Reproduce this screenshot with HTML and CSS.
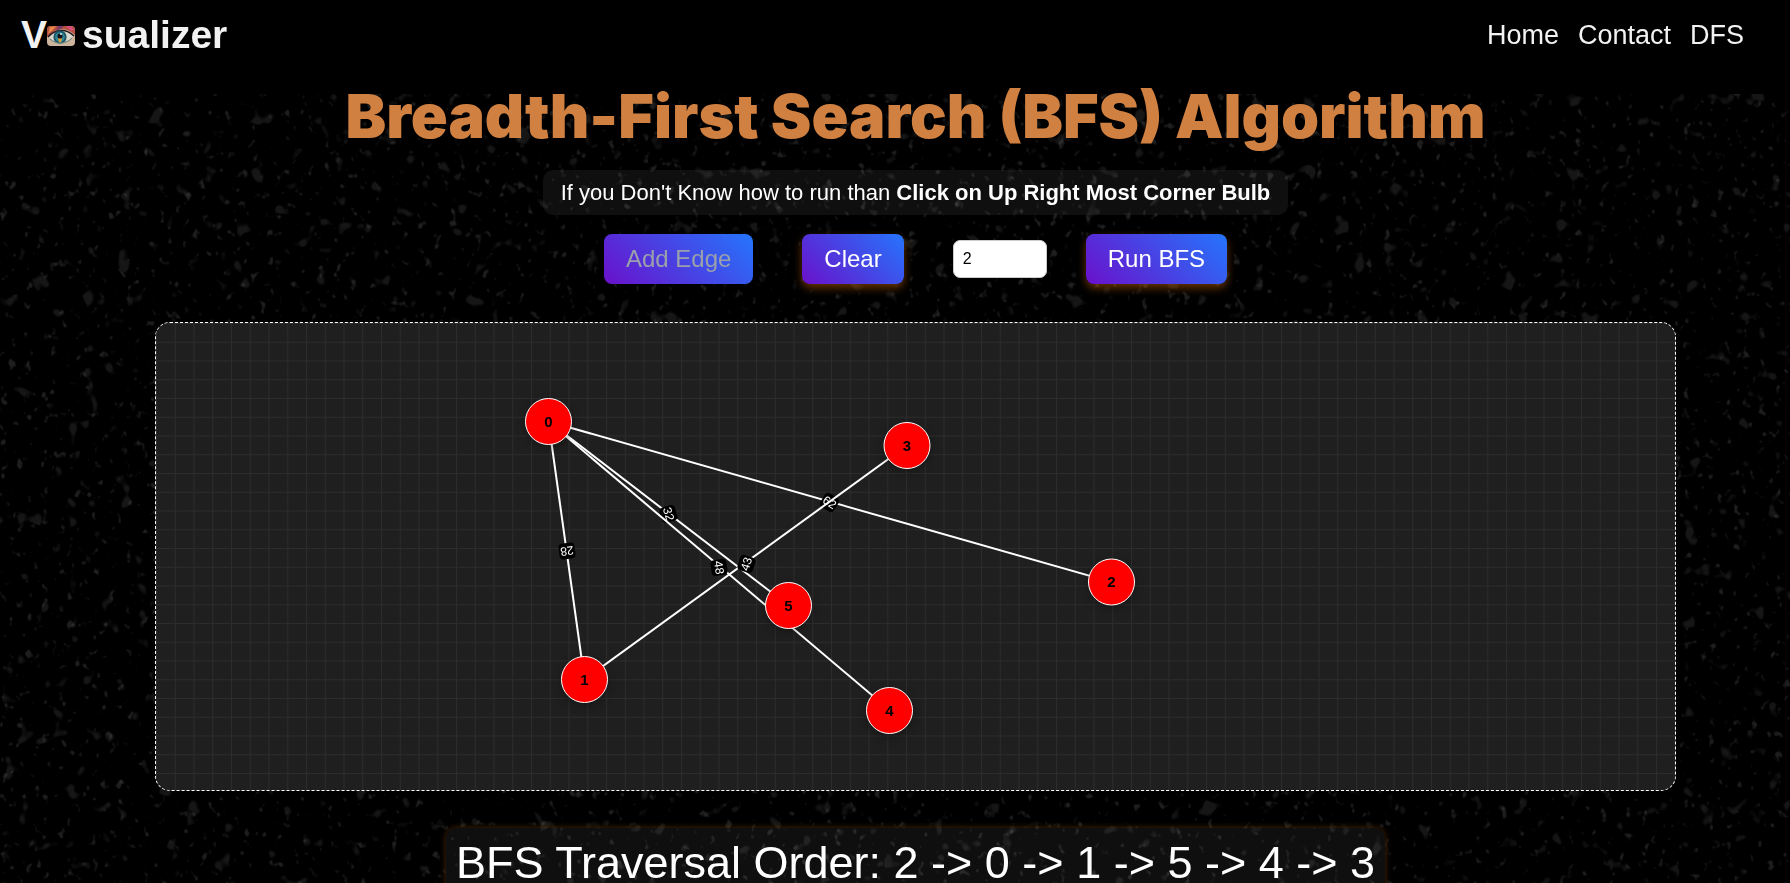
FILE: index.html
```html
<!DOCTYPE html>
<html lang="en">
<head>
<meta charset="utf-8">
<title>Visualizer - BFS</title>
<link rel="stylesheet" href="styles.css">
</head>
<body>
<svg class="texture" aria-hidden="true">
  <filter id="large" x="0" y="0" width="100%" height="100%" color-interpolation-filters="sRGB">
    <feTurbulence type="fractalNoise" baseFrequency="0.06 0.055" numOctaves="2" seed="8"/>
    <feColorMatrix values="0 0 0 0 1  0 0 0 0 1  0 0 0 0 1  9 0 0 0 -6"/>
    <feComponentTransfer><feFuncA type="linear" slope="0.09"/></feComponentTransfer>
  </filter>
  <filter id="small" x="0" y="0" width="100%" height="100%" color-interpolation-filters="sRGB">
    <feTurbulence type="fractalNoise" baseFrequency="0.12 0.1" numOctaves="2" seed="21"/>
    <feColorMatrix values="0 0 0 0 1  0 0 0 0 1  0 0 0 0 1  7 0 0 0 -4.6"/>
    <feComponentTransfer><feFuncA type="linear" slope="0.12"/></feComponentTransfer>
  </filter>
  <rect width="100%" height="100%" filter="url(#large)"/>
  <rect width="100%" height="100%" filter="url(#small)"/>
</svg>

<header class="navbar">
  <a class="logo" href="#">V<svg class="eye" viewBox="0 0 28 20" aria-hidden="true">
      <rect width="28" height="20" rx="4" fill="#cdb49d"/>
      <path d="M4 0H24a4 4 0 0 1 4 4V9C22 3 15 2 8 5L0 11V4a4 4 0 0 1 4-4Z" fill="#b5503f"/>
      <path d="M3 1 9 0 6 4 1 8Z" fill="#e58a4b"/><path d="M11 0h6l-3 3-5 1Z" fill="#7a3b6b"/><path d="M19 0h5l3 4-3 1Z" fill="#d94f7c"/>
      <path d="M2 11C8 4 18 2 26 10 21 17 9 19 2 11Z" fill="#d9d8cc"/>
      <path d="M1 11C8 3 19 2 27 10" fill="none" stroke="#271c25" stroke-width="1.6"/>
      <circle cx="13" cy="11" r="6.6" fill="#1d5266"/>
      <circle cx="13" cy="11" r="4.8" fill="#2f8a94"/>
      <path d="M11 12h4l-1 5-2-1Z" fill="#e0a23a"/>
      <circle cx="13" cy="10" r="2.6" fill="#14101c"/><circle cx="14" cy="8" r="1" fill="#d8eef2"/>
      <path d="M3 13C9 19 20 18 25 12" fill="none" stroke="#5b8582"/>
    </svg>sualizer</a>
  <nav class="links">
    <a href="#">Home</a>
    <a href="#">Contact</a>
    <a href="#">DFS</a>
  </nav>
</header>

<main class="page">
  <h1 class="title">Breadth-First Search (BFS) Algorithm</h1>
  <p class="hint">If you Don't Know how to run than <strong>Click on Up Right Most Corner Bulb</strong></p>
  <div class="controls">
    <button class="btn" type="button" disabled>Add Edge</button>
    <button class="btn" type="button">Clear</button>
    <div class="run">
      <input class="start" type="text" value="2" aria-label="Start node">
      <button class="btn" type="button">Run BFS</button>
    </div>
  </div>

  <div class="board">
    <svg class="graph" role="img" aria-label="Graph">
      <defs>
        <pattern id="grid" width="18.75" height="18.75" patternUnits="userSpaceOnUse">
          <path d="M0 .5H18.75M.5 0V18.75" stroke="#2c2c2c" fill="none"/>
        </pattern>
      </defs>
      <rect width="100%" height="100%" fill="url(#grid)"/>
      <g class="edges">
        <path d="M392.5 98.5 955.5 259"/>
        <g class="weight" transform="translate(673.5 179.5) rotate(32)"><rect x="-8" y="-8" width="16" height="16" rx="4"/><text y="4">62</text></g>
        <path d="M392.5 98.5 428.5 356.5"/>
        <g class="weight" transform="translate(411 228) rotate(172)"><rect x="-8" y="-8" width="16" height="16" rx="4"/><text y="4">28</text></g>
        <path d="M392.5 98.5 632.5 282.5"/>
        <g class="weight" transform="translate(512.5 191) rotate(73)"><rect x="-8" y="-8" width="16" height="16" rx="4"/><text y="4">32</text></g>
        <path d="M392.5 98.5 733.5 387"/>
        <g class="weight" transform="translate(563 244.5) rotate(81)"><rect x="-8" y="-8" width="16" height="16" rx="4"/><text y="4">48</text></g>
        <path d="M428.5 356.5 751 122.5"/>
        <g class="weight" transform="translate(590.5 241) rotate(-72)"><rect x="-8" y="-8" width="16" height="16" rx="4"/><text y="4">43</text></g>
      </g>
      <g class="nodes">
        <g transform="translate(392.5 98.5)"><circle r="23"/><text y="5">0</text></g>
        <g transform="translate(428.5 356.5)"><circle r="23"/><text y="5">1</text></g>
        <g transform="translate(955.5 259)"><circle r="23"/><text y="5">2</text></g>
        <g transform="translate(751 122.5)"><circle r="23"/><text y="5">3</text></g>
        <g transform="translate(733.5 387.5)"><circle r="23"/><text y="5">4</text></g>
        <g transform="translate(632.5 282.5)"><circle r="23"/><text y="5">5</text></g>
      </g>
    </svg>
  </div>

  <p class="result">BFS Traversal Order: 2 -&gt; 0 -&gt; 1 -&gt; 5 -&gt; 4 -&gt; 3</p>
</main>
</body>
</html>
```
FILE: styles.css
```css
* { box-sizing: border-box; }
body {
  margin: 0;
  height: 100vh;
  overflow: hidden;
  background: #000;
  color: #fff;
  font-family: "Liberation Sans", Arial, sans-serif;
}
.texture {
  position: fixed;
  inset: 0;
  z-index: -1;
  width: 100%;
  height: 100%;
}
.navbar {
  display: flex;
  justify-content: space-between;
  align-items: flex-start;
  height: 94px;
  padding: 13px 46px 0 21px;
  background: #000;
}
.navbar a { color: #f2f2f2; text-decoration: none; }
.logo { font-size: 39px; line-height: 44px; font-weight: bold; white-space: nowrap; }
.eye { width: 28px; height: 20px; margin-right: 7px; vertical-align: 2px; }
.links { display: flex; gap: 19px; font-size: 27px; line-height: 44px; }
.page {
  display: flex;
  flex-direction: column;
  align-items: center;
  padding-left: 41px;
}
.title {
  margin: 0;
  color: #d08040;
  font-family: Inter, sans-serif;
  font-size: 61px;
  line-height: 44px;
  font-weight: 900;
  white-space: nowrap;
}
.hint {
  margin: 32px 0 19px;
  padding: 0 18px;
  border-radius: 10px;
  background: rgba(255, 255, 255, 0.06);
  font-size: 22px;
  line-height: 45px;
}
.controls { display: flex; align-items: center; gap: 49px; }
.run { display: flex; align-items: center; gap: 39px; }
.btn {
  height: 50px;
  padding: 0 22px;
  border: 0;
  border-radius: 8px;
  background: linear-gradient(45deg, #6a11cb, #2575fc);
  box-shadow: 0 4px 8px rgba(255, 128, 0, 0.4);
  color: #fff;
  font: 24px "Liberation Sans", Arial, sans-serif;
}
.btn:disabled { color: #9aa0ac; box-shadow: none; }
.start {
  width: 94px;
  height: 38px;
  padding: 0 9px;
  border: 1px solid #ccc;
  border-radius: 7px;
  background: #fff;
  color: #000;
  font: 16px "Liberation Sans", Arial, sans-serif;
}
.board {
  width: 87%;
  height: 469px;
  margin: 38px 0 37px;
  border: 1px dashed #fff;
  border-radius: 15px;
  background: #1f1f1f;
  overflow: hidden;
}
.graph { display: block; width: 100%; height: 100%; }
.edges path { stroke: #fff; stroke-width: 2; fill: none; }
.weight rect { fill: #000; }
.weight text { fill: #fff; font-size: 12px; text-anchor: middle; }
.nodes circle {
  fill: #f00;
  stroke: #fff;
  stroke-width: 1;
  filter: drop-shadow(0 3px 4px rgba(0, 0, 0, 0.3));
}
.nodes text { fill: #000; font-size: 15px; font-weight: bold; text-anchor: middle; }
.result {
  margin: 0;
  padding: 12px 10px;
  border-radius: 10px;
  background: rgba(255, 255, 255, 0.06);
  box-shadow: 0 0 6px rgba(255, 128, 0, 0.3);
  font-size: 45px;
  line-height: 46px;
  white-space: nowrap;
}
```
